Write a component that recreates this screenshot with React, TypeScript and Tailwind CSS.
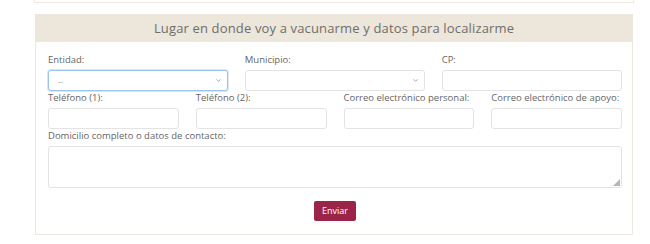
import { ChevronDown } from 'lucide-react'

const font = { fontFamily: '"Open Sans", "Liberation Sans", sans-serif' }

function Field({ label, children }: { label: string; children: React.ReactNode }) {
  return (
    <div className="flex flex-col">
      <label className="text-[9.5px] leading-[12px] text-[#666] mb-[4px] whitespace-nowrap">{label}</label>
      {children}
    </div>
  )
}

function Select({ focused, value }: { focused?: boolean; value?: string }) {
  return (
    <div
      className={
        focused
          ? 'relative h-[21px] rounded-[3px] border border-[#9cc3ea] shadow-[0_0_0_1px_rgba(140,185,235,0.35)] bg-white flex items-center px-[9px]'
          : 'relative h-[21px] rounded-[3px] border border-[#e3e3e3] bg-white flex items-center px-[9px]'
      }
    >
      <span className="text-[8px] text-[#999]">{value}</span>
      <ChevronDown className="absolute right-[5px] top-[6px] w-[7px] h-[7px] text-[#888]" strokeWidth={2.5} />
    </div>
  )
}

function Input() {
  return <div className="h-[21px] rounded-[3px] border border-[#e3e3e3] bg-white" />
}

export default function App() {
  return (
    <div className="w-[650px] h-[244px] bg-white overflow-hidden" style={font}>
      <div className="ml-[34px] w-[600px] h-[3px] border-b border-x border-[#efe9df]" />
      <div className="mt-[11px] ml-[35px] w-[598px] border border-[#ece8e0] bg-white">
        <div className="h-[27px] bg-[#ede6da] flex items-center justify-center">
          <h2 className="text-[13px] text-[#6e6e6e] tracking-[0.15px]">
            Lugar en donde voy a vacunarme y datos para localizarme
          </h2>
        </div>
        <div className="pl-[12px] pr-[10px] pt-[12px] pb-[13px]">
          <div className="grid grid-cols-3 gap-x-[16.5px]">
            <Field label="Entidad:">
              <Select focused value="--" />
            </Field>
            <Field label="Municipio:">
              <Select />
            </Field>
            <Field label="CP:">
              <Input />
            </Field>
          </div>
          <div className="grid grid-cols-4 gap-x-[17px] mt-[1px]">
            <Field label="Teléfono (1):">
              <Input />
            </Field>
            <Field label="Teléfono (2):">
              <Input />
            </Field>
            <Field label="Correo electrónico personal:">
              <Input />
            </Field>
            <Field label="Correo electrónico de apoyo:">
              <Input />
            </Field>
          </div>
          <div className="mt-[1px]">
            <Field label="Domicilio completo o datos de contacto:">
              <div className="relative h-[42px] rounded-[3px] border border-[#e3e3e3] bg-white">
                <svg className="absolute right-[1px] bottom-[1px]" width="7" height="7" viewBox="0 0 7 7">
                  <path d="M7 0 L7 7 L0 7 Z" fill="#b5b5b5" />
                </svg>
              </div>
            </Field>
          </div>
          <div className="flex justify-center mt-[13px]">
            <button className="h-[20px] px-[8px] rounded-[2px] bg-[#9d2449] text-white text-[9px]">Enviar</button>
          </div>
        </div>
      </div>
    </div>
  )
}
